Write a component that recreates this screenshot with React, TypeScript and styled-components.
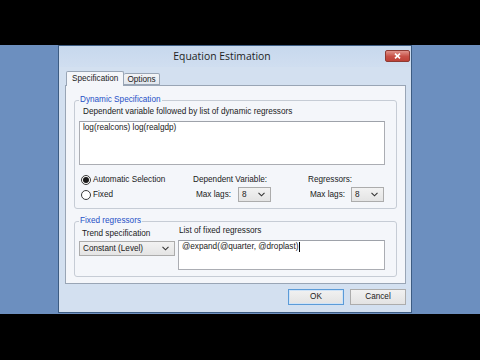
import React from 'react';
import styled, { createGlobalStyle } from 'styled-components';

const GlobalStyle = createGlobalStyle`
  html, body { margin: 0; padding: 0; background: #000; }
  body {
    width: 480px;
    height: 360px;
    overflow: hidden;
    font-family: "Liberation Sans", Arial, sans-serif;
    font-size: 8.2px;
    color: #1a1a1a;
  }
  * { box-sizing: border-box; }
`;

const Screen = styled.div`
  width: 480px;
  height: 360px;
  background: #000;
  padding-top: 45px;
`;

const Desktop = styled.div`
  height: 269px;
  background: #6c8fbf;
  padding-left: 58px;
  display: flex;
  align-items: flex-start;
`;

const Dialog = styled.div`
  width: 354px;
  height: 268px;
  border: 1px solid #3d5c82;
  background: #d3e0f0;
  display: flex;
  flex-direction: column;
`;

const TitleBar = styled.div`
  height: 21px;
  display: flex;
  align-items: flex-start;
  background: linear-gradient(#c7d8ed, #d0def0);
`;

const Title = styled.div`
  flex: 1;
  text-align: center;
  font-family: "Open Sans", "Noto Sans", sans-serif;
  font-size: 10.4px;
  line-height: 21px;
  color: #1e1e1e;
`;

const CloseButton = styled.div`
  width: 25px;
  height: 12px;
  margin: 4px 1px 0 0;
  border: 1px solid #8e3b33;
  border-radius: 2px;
  background: linear-gradient(#e0938a, #c75046 55%, #bd4238);
  display: flex;
  align-items: center;
  justify-content: center;
`;

const Client = styled.div`
  flex: 1;
  display: flex;
  flex-direction: column;
  padding: 4px 5px 0 6px;
`;

const TabStrip = styled.div`
  height: 14px;
  display: flex;
  align-items: flex-end;
  padding-left: 1px;
  position: relative;
  z-index: 1;
`;

const Tab = styled.div<{ $active?: boolean }>`
  height: ${(p) => (p.$active ? 15 : 12)}px;
  margin-bottom: ${(p) => (p.$active ? -1 : 0)}px;
  padding: ${(p) => (p.$active ? '2px 5px 0' : '1px 3px 0')};
  border: 1px solid #99a5b5;
  border-bottom: ${(p) => (p.$active ? 'none' : '1px solid #99a5b5')};
  border-left: ${(p) => (p.$active ? '1px solid #99a5b5' : 'none')};
  border-radius: 2px 2px 0 0;
  background: ${(p) => (p.$active ? '#f4f6fa' : 'linear-gradient(#f3f4f6, #e2e7ee)')};
  line-height: 10px;
  white-space: nowrap;
`;

const TabPage = styled.div`
  height: 199px;
  border: 1px solid #99a5b5;
  background: #f4f6fa;
  padding: 9px 8px 0 8px;
  display: flex;
  flex-direction: column;
  gap: 7px;
`;

const GroupBox = styled.fieldset`
  margin: 0;
  min-width: 0;
  padding: 0 11px 6px 4px;
  border: 1px solid #c6ccd5;
  border-radius: 3px;
`;

const Legend = styled.legend`
  padding: 0 1px;
  line-height: 10px;
  color: #1f50c6;
`;

const Hint = styled.div`
  margin-top: 2px;
  padding-left: 4px;
  line-height: 10px;
`;

const TextField = styled.div<{ $height: number }>`
  height: ${(p) => p.$height}px;
  border: 1px solid #abadb3;
  border-top-color: #9ea2aa;
  background: #fff;
  padding: 1px 3px;
  line-height: 10px;
  white-space: nowrap;
  overflow: hidden;
`;

const Caret = styled.span`
  display: inline-block;
  width: 1px;
  height: 10px;
  background: #000;
  vertical-align: top;
  margin-left: 1px;
`;

const LagGrid = styled.div`
  margin-top: 8px;
  display: grid;
  grid-template-columns: 114px 115px 1fr;
  grid-template-rows: 14px 15px;
  align-items: center;
`;

const RadioRow = styled.div`
  display: flex;
  align-items: center;
  gap: 2px;
  padding-left: 2px;
  line-height: 10px;
`;

const RadioCircle = styled.span<{ $checked?: boolean }>`
  width: 10px;
  height: 10px;
  border-radius: 50%;
  border: 1px solid #3a3a3a;
  background: #fff;
  display: flex;
  align-items: center;
  justify-content: center;
  &::after {
    content: '';
    display: ${(p) => (p.$checked ? 'block' : 'none')};
    width: 6px;
    height: 6px;
    border-radius: 50%;
    background: #1a1a1a;
  }
`;

const ColLabel = styled.div`
  line-height: 10px;
`;

const LagRow = styled.div<{ $indent: number; $gap: number }>`
  display: flex;
  align-items: center;
  padding-left: ${(p) => p.$indent}px;
  gap: ${(p) => p.$gap}px;
  line-height: 10px;
`;

const Dropdown = styled.div<{ $width: number }>`
  width: ${(p) => p.$width}px;
  height: 15px;
  border: 1px solid #acacac;
  background: linear-gradient(#f2f2f2, #e4e4e4);
  display: flex;
  align-items: center;
  justify-content: space-between;
  padding: 0 5px 0 3px;
  line-height: 10px;
  white-space: nowrap;
`;

const FixedRow = styled.div`
  display: flex;
  gap: 3px;
`;

const TrendCol = styled.div`
  width: 96px;
  display: flex;
  flex-direction: column;
  gap: 2px;
  padding-top: 3px;
`;

const ListCol = styled.div`
  flex: 1;
  display: flex;
  flex-direction: column;
  gap: 4px;
`;

const SubLabel = styled.div<{ $indent: number }>`
  padding-left: ${(p) => p.$indent}px;
  line-height: 10px;
`;

const ButtonRow = styled.div`
  margin-top: 5px;
  display: flex;
  justify-content: flex-end;
  gap: 6px;
`;

const Button = styled.div<{ $default?: boolean }>`
  width: 56px;
  height: 16px;
  border: 1px solid ${(p) => (p.$default ? '#5b9bd8' : '#acacac')};
  box-shadow: ${(p) => (p.$default ? 'inset 0 0 0 1px #cfe3f7' : 'none')};
  background: linear-gradient(#f1f1f1, #e3e3e3);
  display: flex;
  align-items: center;
  justify-content: center;
  line-height: 10px;
`;

const Chevron = () => (
  <svg width={7} height={5} viewBox="0 0 7 5">
    <path d="M0.5 0.8 L3.5 3.8 L6.5 0.8" fill="none" stroke="#333" strokeWidth={1.1} />
  </svg>
);

const CloseGlyph = () => (
  <svg width={7} height={6} viewBox="0 0 7 6">
    <path d="M1 0.6 L6 5.4 M6 0.6 L1 5.4" stroke="#fff" strokeWidth={1.6} />
  </svg>
);

export default function App() {
  return (
    <Screen>
      <GlobalStyle />
      <Desktop>
        <Dialog>
          <TitleBar>
            <Title>Equation Estimation</Title>
            <CloseButton>
              <CloseGlyph />
            </CloseButton>
          </TitleBar>
          <Client>
            <TabStrip>
              <Tab $active>Specification</Tab>
              <Tab>Options</Tab>
            </TabStrip>
            <TabPage>
              <GroupBox>
                <Legend>Dynamic Specification</Legend>
                <Hint>Dependent variable followed by list of dynamic regressors</Hint>
                <TextField $height={44} style={{ marginTop: 4 }}>
                  log(realcons) log(realgdp)
                </TextField>
                <LagGrid>
                  <RadioRow>
                    <RadioCircle $checked />
                    Automatic Selection
                  </RadioRow>
                  <ColLabel>Dependent Variable:</ColLabel>
                  <ColLabel>Regressors:</ColLabel>
                  <RadioRow>
                    <RadioCircle />
                    Fixed
                  </RadioRow>
                  <LagRow $indent={3} $gap={7}>
                    Max lags:
                    <Dropdown $width={33}>
                      8
                      <Chevron />
                    </Dropdown>
                  </LagRow>
                  <LagRow $indent={2} $gap={6}>
                    Max lags:
                    <Dropdown $width={33}>
                      8
                      <Chevron />
                    </Dropdown>
                  </LagRow>
                </LagGrid>
              </GroupBox>
              <GroupBox>
                <Legend>Fixed regressors</Legend>
                <FixedRow>
                  <TrendCol>
                    <SubLabel $indent={3}>Trend specification</SubLabel>
                    <Dropdown $width={96}>
                      Constant (Level)
                      <Chevron />
                    </Dropdown>
                  </TrendCol>
                  <ListCol>
                    <SubLabel $indent={1}>List of fixed regressors</SubLabel>
                    <TextField $height={30}>
                      @expand(@quarter, @droplast)
                      <Caret />
                    </TextField>
                  </ListCol>
                </FixedRow>
              </GroupBox>
            </TabPage>
            <ButtonRow>
              <Button $default>OK</Button>
              <Button>Cancel</Button>
            </ButtonRow>
          </Client>
        </Dialog>
      </Desktop>
    </Screen>
  );
}
